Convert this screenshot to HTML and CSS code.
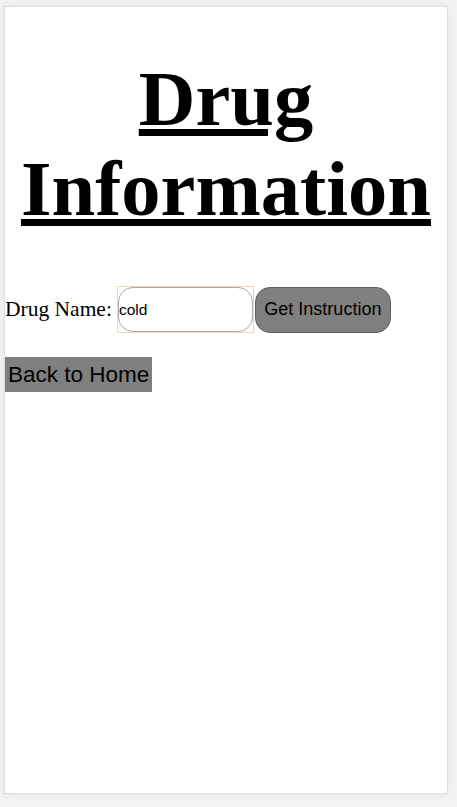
FILE: index.html
```html
<!DOCTYPE html>
<html>
<head>
<meta charset="utf-8">
<link rel="stylesheet" href="styles.css">
</head>
<body>
<div class="card">
  <h1 class="title">Drug Information</h1>
  <form class="search">
    <label class="label" for="drug">Drug Name:</label>
    <span class="focus-ring"><input id="drug" class="field" type="text" value="cold"></span>
    <button type="button" class="get-btn">Get Instruction</button>
  </form>
  <button type="button" class="back-btn">Back to Home</button>
</div>
</body>
</html>
```
FILE: styles.css
```css
html, body {
  margin: 0;
  padding: 0;
  background: #f3f3f3;
}
body {
  padding: 6px 9px 12px 4px;
  font-family: "Liberation Serif", "Times New Roman", serif;
}
.card {
  background: #fff;
  border: 1px solid #dedede;
  box-shadow: 0 0 8px rgba(0,0,0,0.06);
  height: 788px;
  box-sizing: border-box;
}
.title {
  margin: 47px 0 0;
  font-size: 78.5px;
  line-height: 90px;
  font-weight: bold;
  text-align: center;
  text-decoration: underline;
  color: #000;
}
.search {
  display: flex;
  align-items: center;
  margin-top: 52px;
}
.label {
  font-size: 21.5px;
  color: #000;
  margin-right: 5px;
}
.focus-ring {
  display: inline-flex;
  border: 1px solid #efd9ae;
}
.field {
  width: 135px;
  height: 45px;
  box-sizing: border-box;
  border: 1px solid #a9a9a9;
  border-radius: 15px;
  padding: 0;
  font-family: "Liberation Sans", Arial, sans-serif;
  font-size: 15.5px;
  color: #000;
  outline: none;
}
.get-btn {
  margin-left: 1px;
  width: 136px;
  height: 46px;
  background: #808080;
  border: 1px solid #5e5e5e;
  border-radius: 15px;
  font-family: "Liberation Sans", Arial, sans-serif;
  font-size: 18px;
  color: #000;
  padding: 0;
}
.back-btn {
  display: block;
  margin-top: 24px;
  background: #808080;
  border: none;
  border-radius: 0;
  padding: 3px 3px;
  height: 35px;
  font-family: "Liberation Sans", Arial, sans-serif;
  font-size: 22.5px;
  color: #000;
}
```
